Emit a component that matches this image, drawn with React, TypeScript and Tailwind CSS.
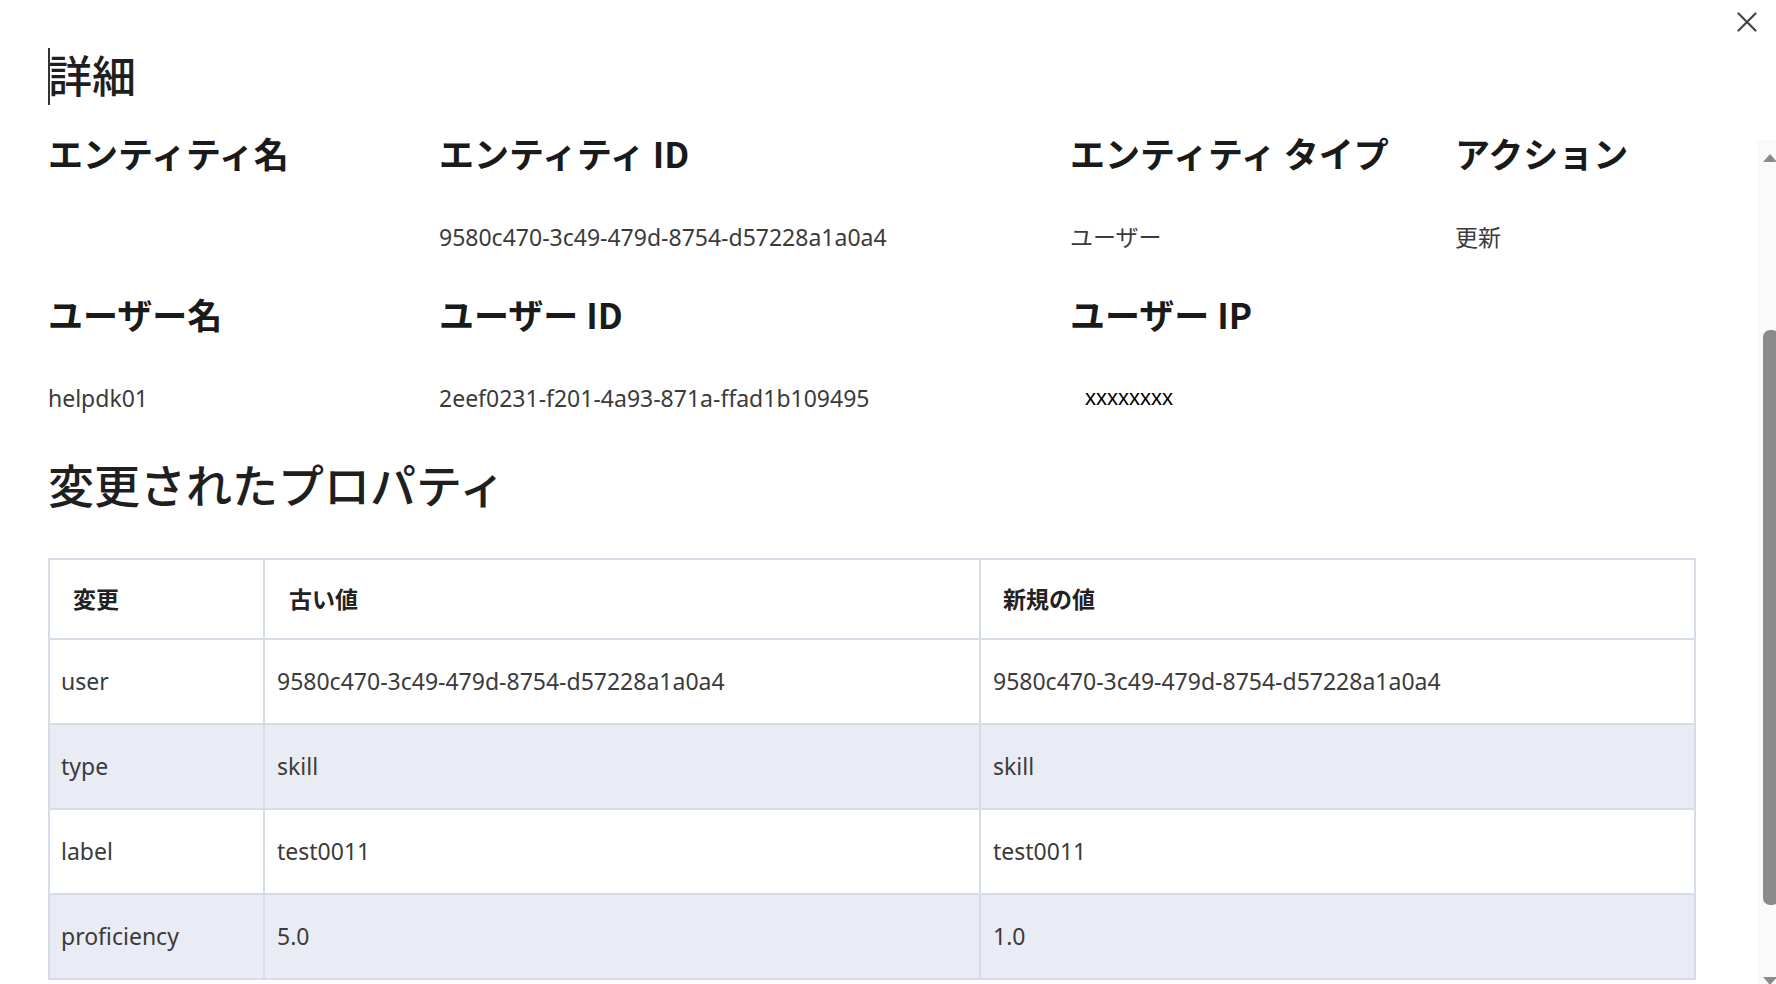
import React from 'react';

type Field = { label: string; value: string; raw?: boolean };

const FIELDS: Field[] = [
  { label: 'エンティティ名', value: '' },
  { label: 'エンティティ ID', value: '9580c470-3c49-479d-8754-d57228a1a0a4' },
  { label: 'エンティティ タイプ', value: 'ユーザー' },
  { label: 'アクション', value: '更新' },
  { label: 'ユーザー名', value: 'helpdk01' },
  { label: 'ユーザー ID', value: '2eef0231-f201-4a93-871a-ffad1b109495' },
  { label: 'ユーザー IP', value: 'xxxxxxxx', raw: true },
];

const CHANGES = [
  { key: 'user', oldValue: '9580c470-3c49-479d-8754-d57228a1a0a4', newValue: '9580c470-3c49-479d-8754-d57228a1a0a4' },
  { key: 'type', oldValue: 'skill', newValue: 'skill' },
  { key: 'label', oldValue: 'test0011', newValue: 'test0011' },
  { key: 'proficiency', oldValue: '5.0', newValue: '1.0' },
];

function FakeScrollbar() {
  return (
    <div className="mt-[12px] w-[19px] shrink-0 overflow-hidden">
      <div className="flex w-[26px] flex-col bg-[#fafafa] pt-[10px]">
        <div className="flex h-[15px] items-center justify-center">
          <svg width="14" height="8" viewBox="0 0 14 8">
            <polygon points="7,0 14,8 0,8" fill="#8b8b8b" />
          </svg>
        </div>
        <div className="h-[165px]" />
        <div className="ml-[6px] mr-[4px] h-[575px] rounded-[7px] bg-[#8b8b8b]" />
        <div className="h-[72px]" />
        <div className="flex h-[15px] items-start justify-center">
          <svg width="14" height="8" viewBox="0 0 14 8">
            <polygon points="0,0 14,0 7,8" fill="#8b8b8b" />
          </svg>
        </div>
      </div>
    </div>
  );
}

export default function App() {
  return (
    <div className="relative flex h-[984px] w-full flex-col overflow-hidden bg-white font-['Noto_Sans','Noto_Sans_CJK_JP',sans-serif] text-[#1f1f1f]">
      <button type="button" className="absolute right-[19px] top-[12px] text-[#454545]">
        <svg width="20" height="20" viewBox="0 0 20 20">
          <path d="M1.5 1.5 18.5 18.5M18.5 1.5 1.5 18.5" stroke="currentColor" strokeWidth="2.2" strokeLinecap="round" />
        </svg>
      </button>

      <div className="h-[128px] shrink-0 pl-[48px] pt-[48px]">
        <h1 className="relative h-[56px] text-[44px] font-medium leading-[56px]">
          <span className="absolute left-0 top-0 h-[57px] w-[2px] bg-[#333]" />
          詳細
        </h1>
      </div>

      <div className="flex min-h-0 flex-1">
        <div className="min-w-0 flex-1 pl-[48px] pr-[61px] pt-[7px]">
          <div className="grid grid-cols-[391px_631px_385px_1fr] gap-y-[44px]">
            {FIELDS.map((f) => (
              <div key={f.label}>
                <div className="h-[40px] whitespace-nowrap font-['Noto_Sans_CJK_JP',sans-serif] text-[35px] font-bold leading-[36px] text-[#1a1a1a]">
                  {f.label}
                </div>
                {f.raw ? (
                  <div className="mt-[47px] h-[30px] pl-[15px] font-['Liberation_Sans',sans-serif] text-[22px] leading-[30px] text-black">
                    {f.value}
                  </div>
                ) : (
                  <div className="mt-[47px] h-[30px] whitespace-nowrap text-[23px] leading-[30px] text-[#3b3b3b]">{f.value}</div>
                )}
              </div>
            ))}
          </div>

          <h2 className="mt-[45px] h-[54px] text-[46px] font-medium leading-[54px]">変更されたプロパティ</h2>

          <table className="mt-[46px] w-full table-fixed border-collapse border-2 border-[#d5dbe7]">
            <colgroup>
              <col className="w-[215px]" />
              <col className="w-[716px]" />
              <col />
            </colgroup>
            <thead>
              <tr className="bg-white">
                <th className="h-[80px] border-2 border-[#d5dbe7] pl-[23px] text-left text-[23px] font-bold text-[#222]">変更</th>
                <th className="h-[80px] border-2 border-[#d5dbe7] pl-[24px] text-left text-[23px] font-bold text-[#222]">古い値</th>
                <th className="h-[80px] border-2 border-[#d5dbe7] pl-[22px] text-left text-[23px] font-bold text-[#222]">新規の値</th>
              </tr>
            </thead>
            <tbody>
              {CHANGES.map((c, i) => (
                <tr key={c.key} className={i % 2 === 1 ? 'bg-[#e9ecf4]' : 'bg-white'}>
                  <td className="h-[85px] border-2 border-[#d5dbe7] pl-[11px] text-[23px] text-[#3b3b3b]">{c.key}</td>
                  <td className="h-[85px] border-2 border-[#d5dbe7] pl-[12px] text-[23px] text-[#3b3b3b]">{c.oldValue}</td>
                  <td className="h-[85px] border-2 border-[#d5dbe7] pl-[12px] text-[23px] text-[#3b3b3b]">{c.newValue}</td>
                </tr>
              ))}
            </tbody>
          </table>
        </div>
        <FakeScrollbar />
      </div>
    </div>
  );
}
